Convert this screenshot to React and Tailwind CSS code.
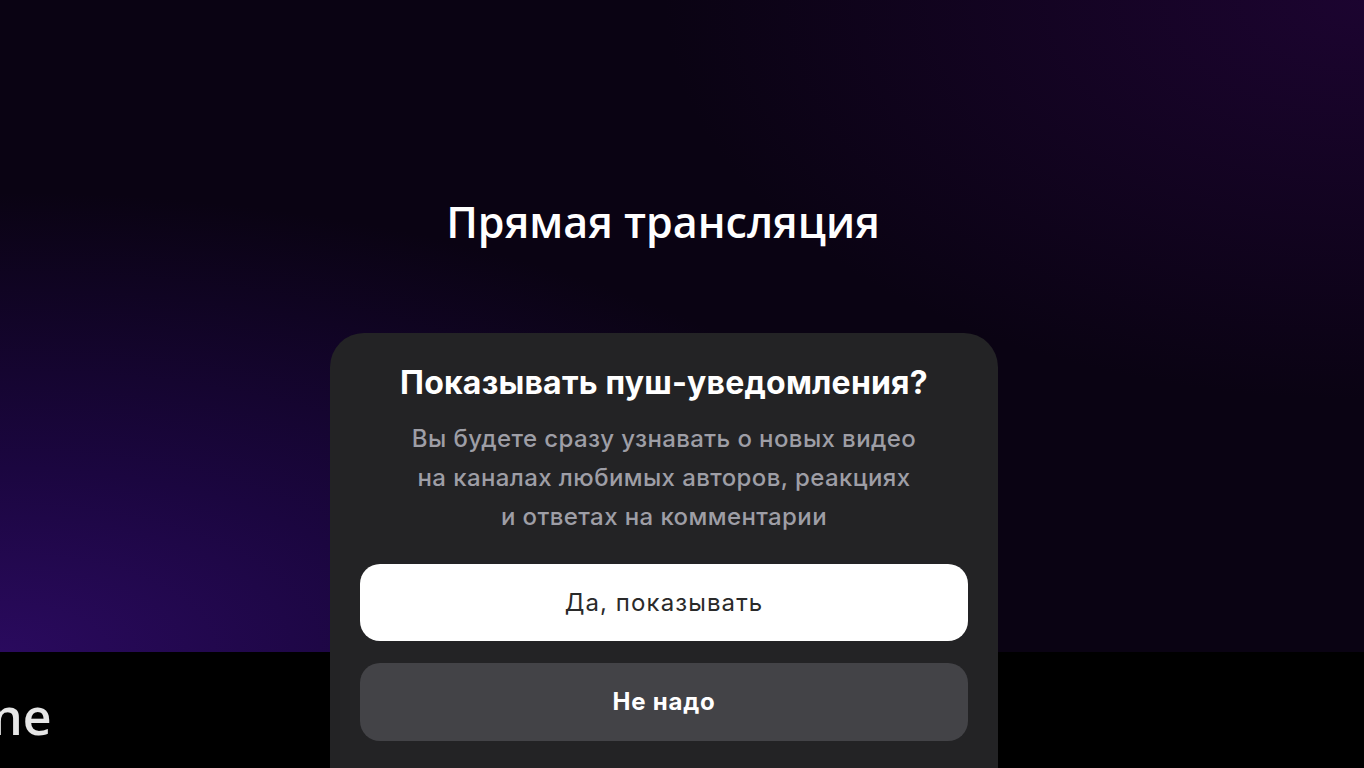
export default function App() {
  return (
    <div className="relative w-[1364px] h-[768px] overflow-hidden bg-black" style={{ fontFamily: "Inter, Roboto, 'Noto Sans', sans-serif" }}>
      <div className="h-[652px] flex flex-col items-center pr-[38px] bg-[#0a0313] bg-[radial-gradient(ellipse_1000px_460px_at_0%_100%,#2a0a5e_0%,#1b0640_40%,transparent_100%),radial-gradient(ellipse_700px_400px_at_100%_0%,#1c0430_0%,transparent_100%)]">
        <h1 className="mt-[194px] text-[43px] leading-[56px] font-semibold text-white" style={{ fontFamily: "'Open Sans', 'Noto Sans', sans-serif" }}>
          Прямая трансляция
        </h1>
      </div>
      <div className="h-[116px] bg-black flex items-center pt-[12px]">
        <span className="ml-[-9px] text-[50px] font-semibold text-[#e6e6e6] leading-none" style={{ fontFamily: "'Open Sans', sans-serif" }}>ne</span>
      </div>

      <div className="absolute left-[330px] top-[333px] w-[668px] h-[470px] rounded-[34px] bg-[#232325] px-[30px] pt-[30px] flex flex-col items-center">
        <h2 className="text-[32px] leading-[40px] font-bold text-white tracking-[0.2px] whitespace-nowrap">Показывать пуш-уведомления?</h2>
        <p className="mt-[16px] text-[24px] leading-[39px] text-[#9e9ea6] text-center font-medium tracking-[0.4px] whitespace-nowrap">
          Вы будете сразу узнавать о новых видео<br />на каналах любимых авторов, реакциях<br />и ответах на комментарии
        </p>
        <button className="mt-[28px] w-full h-[77px] rounded-[20px] bg-white text-[#2a2a2a] text-[24px] tracking-[1.1px]">Да, показывать</button>
        <button className="mt-[22px] w-full h-[78px] rounded-[20px] bg-[#434347] text-white text-[24px] font-bold tracking-[0.8px]">Не надо</button>
      </div>
    </div>
  );
}
